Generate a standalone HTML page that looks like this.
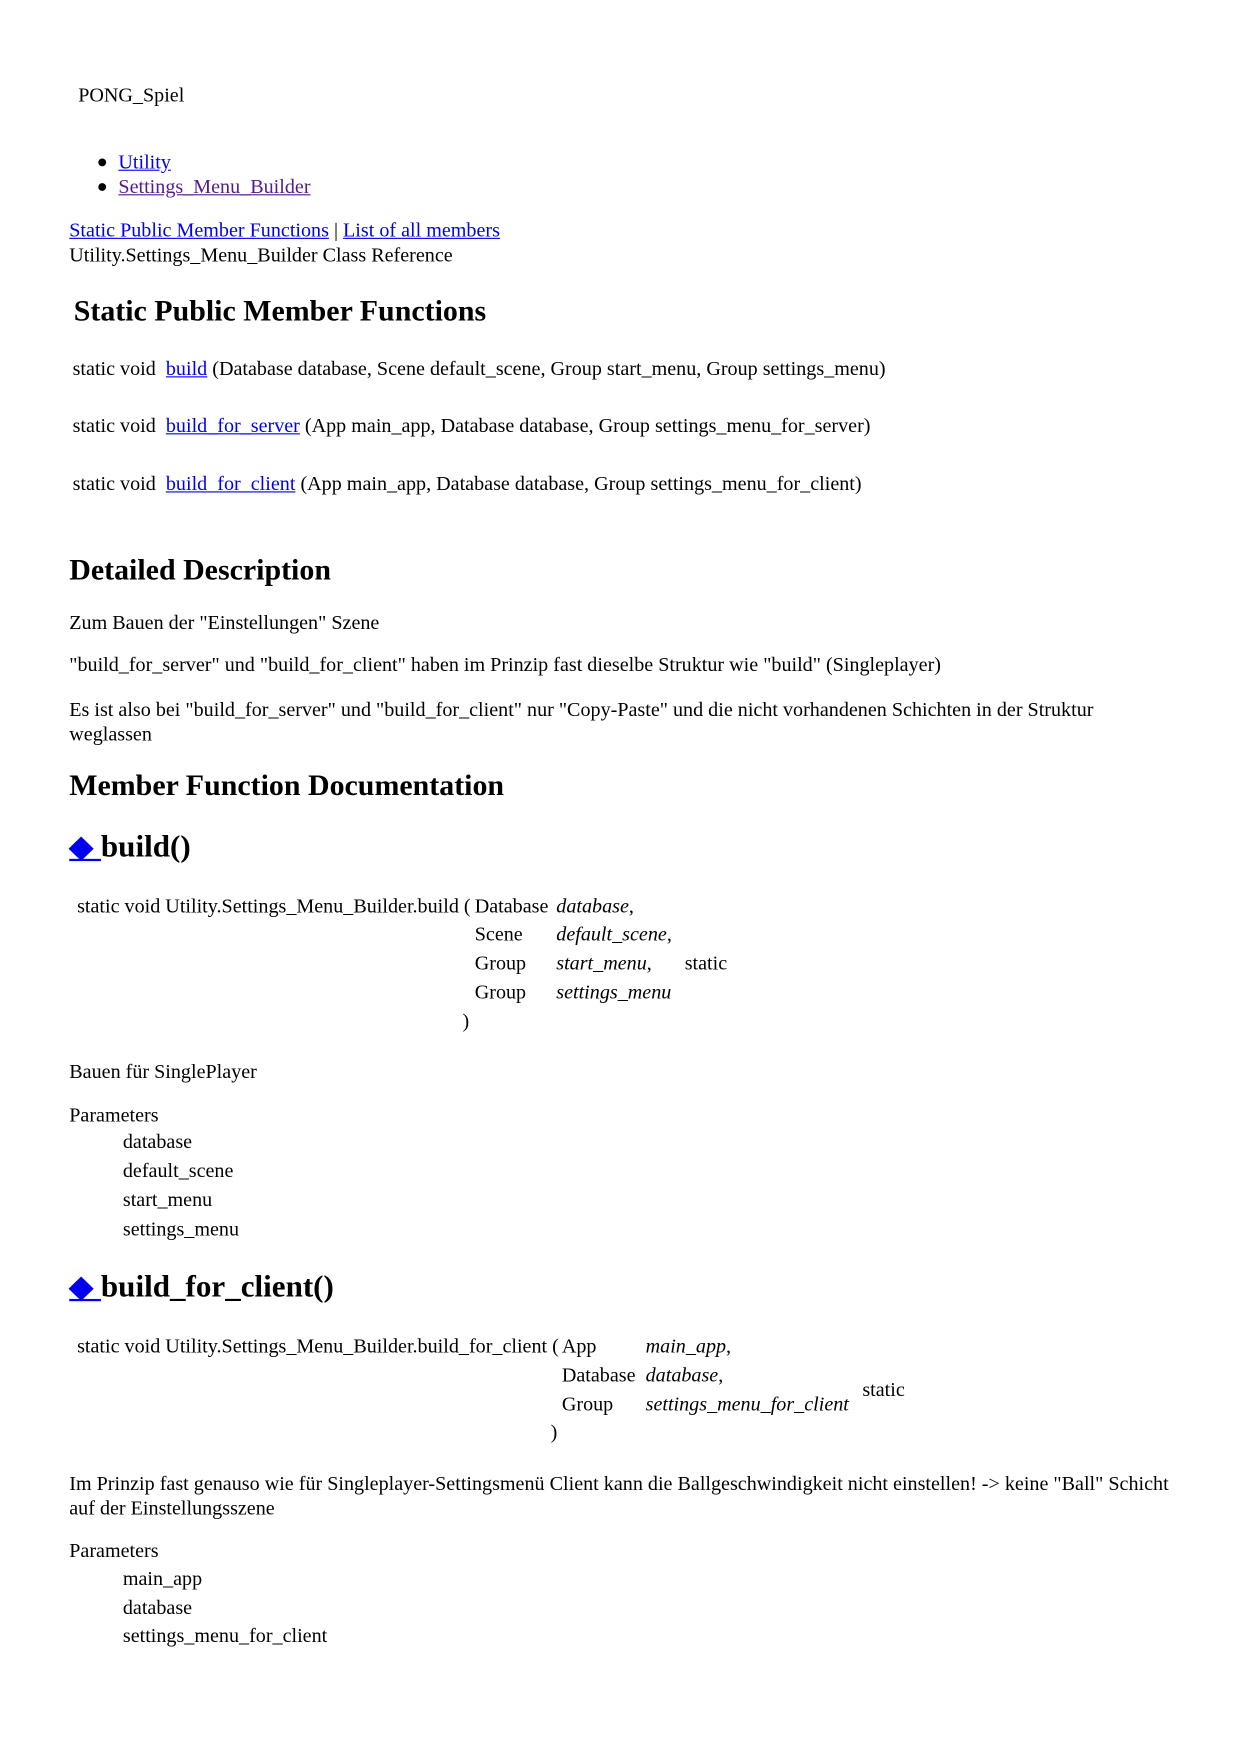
<!DOCTYPE html>
<html><head><meta charset="utf-8"><style>
html,body{margin:0;padding:0;background:#fff;}
body{width:1240px;height:1755px;overflow:hidden;position:relative;}
#c{position:absolute;left:0;top:1px;width:1110px;height:1571px;transform:scale(1.117);transform-origin:0 0;font-family:"Liberation Serif",serif;color:#000;}
.l{position:absolute;white-space:nowrap;font-size:18px;line-height:22px;}
.h{position:absolute;white-space:nowrap;font-size:26px;line-height:30px;font-weight:bold;transform:scaleX(1.03);transform-origin:0 0;}
.h2{font-size:27px;}
a{color:#0000ee;text-decoration:underline;}
a.v{color:#551a8b;}
i{font-style:italic;}
.dot{position:absolute;width:7px;height:7px;border-radius:50%;background:#000;}
</style></head><body><div id="c">
<div class="l" style="left:70px;top:73px">PONG_Spiel</div>
<div class="dot" style="left:88px;top:141px"></div>
<div class="dot" style="left:88px;top:163px"></div>
<div class="l" style="left:106px;top:133px"><a href="#">Utility</a></div>
<div class="l" style="left:106px;top:155px"><a class="v" href="#">Settings_Menu_Builder</a></div>
<div class="l" style="left:62px;top:194px"><a href="#">Static Public Member Functions</a> | <a href="#">List of all members</a></div>
<div class="l" style="left:62px;top:216px">Utility.Settings_Menu_Builder Class Reference</div>
<div class="h" style="left:66px;top:263px">Static Public Member Functions</div>
<div class="l" style="left:65px;top:318px">static void&nbsp; <a href="#">build</a> (Database database, Scene default_scene, Group start_menu, Group settings_menu)</div>
<div class="l" style="left:65px;top:369px">static void&nbsp; <a href="#">build_for_server</a> (App main_app, Database database, Group settings_menu_for_server)</div>
<div class="l" style="left:65px;top:421px">static void&nbsp; <a href="#">build_for_client</a> (App main_app, Database database, Group settings_menu_for_client)</div>
<div class="h" style="left:62px;top:495px">Detailed Description</div>
<div class="l" style="left:62px;top:545px">Zum Bauen der "Einstellungen" Szene</div>
<div class="l" style="left:62px;top:583px">"build_for_server" und "build_for_client" haben im Prinzip fast dieselbe Struktur wie "build" (Singleplayer)</div>
<div class="l" style="left:62px;top:623px">Es ist also bei "build_for_server" und "build_for_client" nur "Copy-Paste" und die nicht vorhandenen Schichten in der Struktur</div>
<div class="l" style="left:62px;top:645px">weglassen</div>
<div class="h" style="left:62px;top:688px">Member Function Documentation</div>
<div class="h h2" style="left:62px;top:742px"><a href="#" style="color:#0000ee">&#9670;&nbsp;</a>build()</div>
<div class="l" style="left:69px;top:799px">static void Utility.Settings_Menu_Builder.build (</div>
<div class="l" style="left:425px;top:799px">Database</div><div class="l" style="left:498px;top:799px"><i>database</i>,</div>
<div class="l" style="left:425px;top:824px">Scene</div><div class="l" style="left:498px;top:824px"><i>default_scene</i>,</div>
<div class="l" style="left:425px;top:850px">Group</div><div class="l" style="left:498px;top:850px"><i>start_menu</i>,</div>
<div class="l" style="left:613px;top:850px">static</div>
<div class="l" style="left:425px;top:876px">Group</div><div class="l" style="left:498px;top:876px"><i>settings_menu</i></div>
<div class="l" style="left:414px;top:902px">)</div>
<div class="l" style="left:62px;top:947px">Bauen für SinglePlayer</div>
<div class="l" style="left:62px;top:986px">Parameters</div>
<div class="l" style="left:110px;top:1010px">database</div>
<div class="l" style="left:110px;top:1036px">default_scene</div>
<div class="l" style="left:110px;top:1062px">start_menu</div>
<div class="l" style="left:110px;top:1088px">settings_menu</div>
<div class="h h2" style="left:62px;top:1136px"><a href="#" style="color:#0000ee">&#9670;&nbsp;</a>build_for_client()</div>
<div class="l" style="left:69px;top:1193px">static void Utility.Settings_Menu_Builder.build_for_client (</div>
<div class="l" style="left:503px;top:1193px">App</div><div class="l" style="left:578px;top:1193px"><i>main_app</i>,</div>
<div class="l" style="left:503px;top:1219px">Database</div><div class="l" style="left:578px;top:1219px"><i>database</i>,</div>
<div class="l" style="left:503px;top:1245px">Group</div><div class="l" style="left:578px;top:1245px"><i>settings_menu_for_client</i></div>
<div class="l" style="left:772px;top:1232px">static</div>
<div class="l" style="left:493px;top:1270px">)</div>
<div class="l" style="left:62px;top:1316px">Im Prinzip fast genauso wie für Singleplayer-Settingsmenü Client kann die Ballgeschwindigkeit nicht einstellen! -&gt; keine "Ball" Schicht</div>
<div class="l" style="left:62px;top:1338px">auf der Einstellungsszene</div>
<div class="l" style="left:62px;top:1376px">Parameters</div>
<div class="l" style="left:110px;top:1401px">main_app</div>
<div class="l" style="left:110px;top:1427px">database</div>
<div class="l" style="left:110px;top:1452px">settings_menu_for_client</div>
</div></body></html>
